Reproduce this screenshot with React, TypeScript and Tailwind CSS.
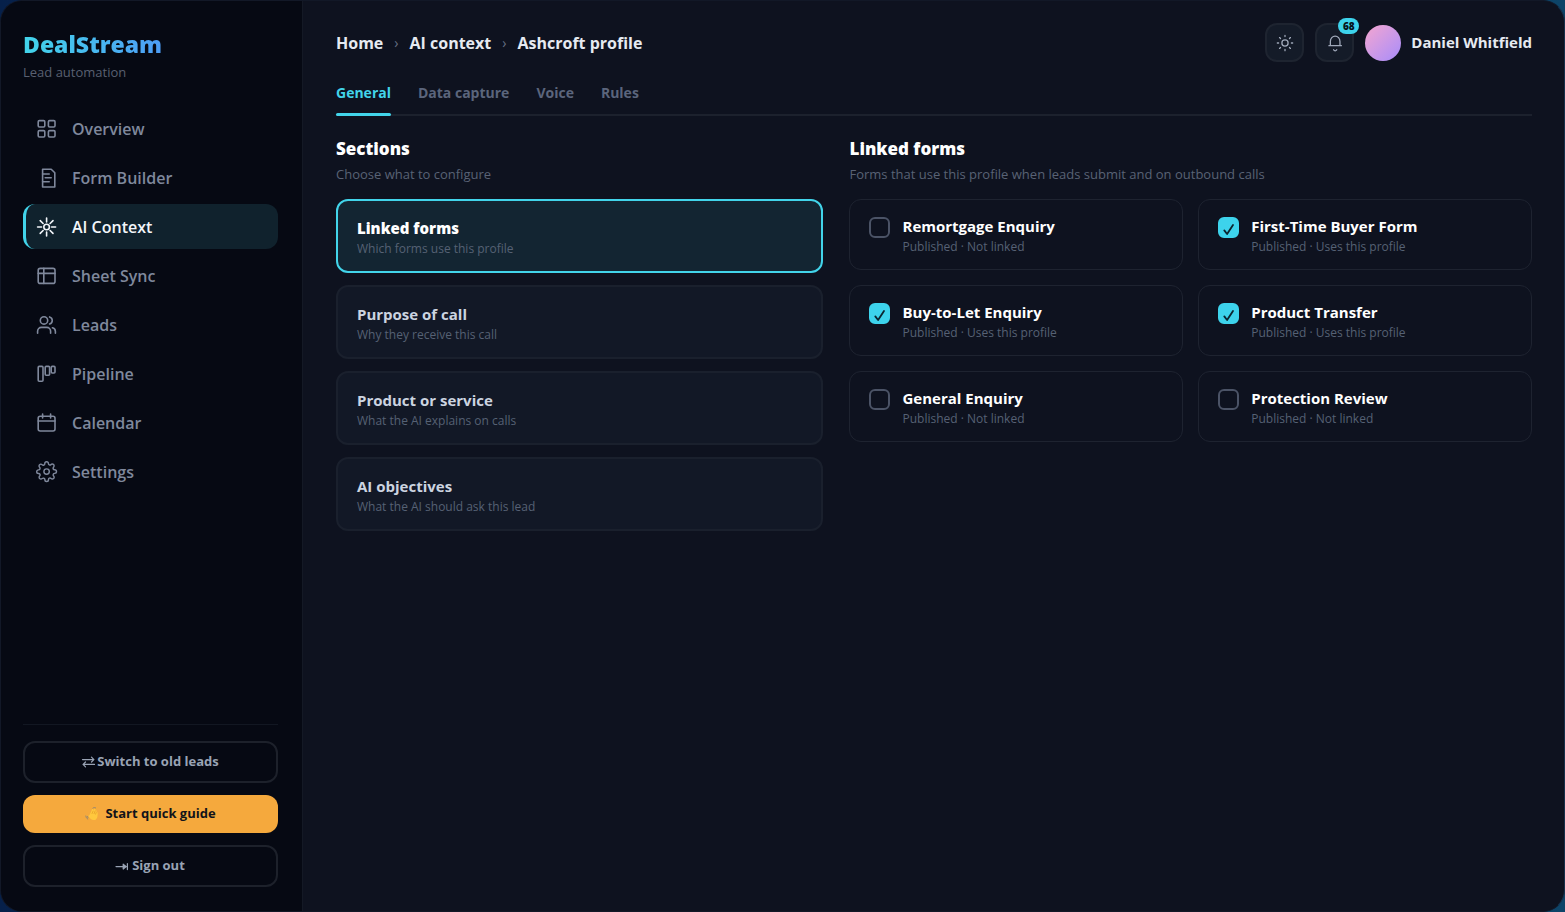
import { useState } from "react";
import type { ReactNode } from "react";

type IconProps = { children: ReactNode; className?: string; strokeWidth?: number };

function Icon({ children, className = "size-5", strokeWidth = 1.6 }: IconProps) {
  return (
    <svg
      viewBox="0 0 20 20"
      className={`${className} shrink-0 overflow-visible`}
      fill="none"
      stroke="currentColor"
      strokeWidth={strokeWidth}
      strokeLinecap="round"
      strokeLinejoin="round"
      aria-hidden="true"
    >
      {children}
    </svg>
  );
}

const navItems = [
  {
    label: "Overview",
    icon: (
      <>
        <rect x="1.2" y="1.6" width="6.6" height="6.4" rx="1.2" />
        <rect x="11.4" y="1.6" width="6.6" height="6.4" rx="1.2" />
        <rect x="1.2" y="11.6" width="6.6" height="6.4" rx="1.2" />
        <rect x="11.4" y="11.6" width="6.6" height="6.4" rx="1.2" />
      </>
    ),
  },
  {
    label: "Form Builder",
    icon: (
      <>
        <path d="M5.6 1.2h8.6l3.6 3.6V19H5.6z" />
        <path d="M5.6 6h6.6M8.2 9.8h6M5.6 13.8h6.6" />
      </>
    ),
  },
  {
    label: "AI Context",
    icon: (
      <>
        <circle cx="9.6" cy="10" r="2.8" />
        <path d="M9.6 1v4M9.6 15v4M.6 10h4M14.6 10h4M3.2 3.6l2.9 2.9M13.1 13.5l2.9 2.9M3.2 16.4l2.9-2.9M13.1 6.5l2.9-2.9" />
      </>
    ),
  },
  {
    label: "Sheet Sync",
    icon: (
      <>
        <rect x="1.2" y="2.4" width="16.8" height="15" rx="2" />
        <path d="M1.2 7.4h16.8M6.8 2.4v15" />
      </>
    ),
  },
  {
    label: "Leads",
    icon: (
      <>
        <circle cx="7" cy="5.4" r="3.7" />
        <path d="M.6 18.2v-2a3.8 3.8 0 0 1 3.8-3.8h5.4a3.8 3.8 0 0 1 3.8 3.8v2" />
        <path d="M12.6 1.9a3.7 3.7 0 0 1 0 7.1M15.4 12.7a3.8 3.8 0 0 1 3 3.7v1.8" />
      </>
    ),
  },
  {
    label: "Pipeline",
    icon: (
      <>
        <rect x="1.2" y="2.4" width="4.8" height="14.8" rx="1" />
        <rect x="8.2" y="2.4" width="4.4" height="8.8" rx="1" />
        <rect x="14.2" y="2.4" width="3.8" height="6.6" rx="1" />
      </>
    ),
  },
  {
    label: "Calendar",
    icon: (
      <>
        <rect x="1.2" y="3.2" width="16.8" height="14.8" rx="2" />
        <path d="M1.2 8h16.8M5.6 1v4M13.6 1v4" />
      </>
    ),
  },
  {
    label: "Settings",
    icon: (
      <g transform="translate(-1.2 -1.2) scale(.9)">
        <circle cx="12" cy="12" r="3" />
        <path d="M19.4 15a1.65 1.65 0 0 0 .33 1.82l.06.06a2 2 0 0 1 0 2.83 2 2 0 0 1-2.83 0l-.06-.06a1.65 1.65 0 0 0-1.82-.33 1.65 1.65 0 0 0-1 1.51V21a2 2 0 0 1-2 2 2 2 0 0 1-2-2v-.09A1.65 1.65 0 0 0 9 19.4a1.65 1.65 0 0 0-1.82.33l-.06.06a2 2 0 0 1-2.83 0 2 2 0 0 1 0-2.83l.06-.06a1.65 1.65 0 0 0 .33-1.82 1.65 1.65 0 0 0-1.51-1H3a2 2 0 0 1-2-2 2 2 0 0 1 2-2h.09A1.65 1.65 0 0 0 4.6 9a1.65 1.65 0 0 0-.33-1.82l-.06-.06a2 2 0 0 1 0-2.83 2 2 0 0 1 2.83 0l.06.06a1.65 1.65 0 0 0 1.82.33H9a1.65 1.65 0 0 0 1-1.51V3a2 2 0 0 1 2-2 2 2 0 0 1 2 2v.09a1.65 1.65 0 0 0 1 1.51 1.65 1.65 0 0 0 1.82-.33l.06-.06a2 2 0 0 1 2.83 0 2 2 0 0 1 0 2.83l-.06.06a1.65 1.65 0 0 0-.33 1.82V9a1.65 1.65 0 0 0 1.51 1H21a2 2 0 0 1 2 2 2 2 0 0 1-2 2h-.09a1.65 1.65 0 0 0-1.51 1z" />
      </g>
    ),
  },
];

const tabs = ["General", "Data capture", "Voice", "Rules"];

const sections = [
  { title: "Linked forms", hint: "Which forms use this profile" },
  { title: "Purpose of call", hint: "Why they receive this call" },
  { title: "Product or service", hint: "What the AI explains on calls" },
  { title: "AI objectives", hint: "What the AI should ask this lead" },
];

const initialForms = [
  { name: "Remortgage Enquiry", linked: false },
  { name: "First-Time Buyer Form", linked: true },
  { name: "Buy-to-Let Enquiry", linked: true },
  { name: "Product Transfer", linked: true },
  { name: "General Enquiry", linked: false },
  { name: "Protection Review", linked: false },
];

function Sidebar() {
  const [active, setActive] = useState("AI Context");

  return (
    <aside className="flex w-[302px] shrink-0 flex-col border-r border-[#141925] bg-[#060913] pt-[27px] pr-6 pb-6 pl-[22px]">
      <div>
        <span className="inline-block bg-linear-to-r from-[#42d4ea] to-[#4d9df5] bg-clip-text text-[23px] leading-8 font-extrabold text-transparent">
          DealStream
        </span>
        <p className="text-[13px] leading-6 text-[#596071]">Lead automation</p>
      </div>

      <nav className="mt-[22px] flex flex-col gap-1">
        {navItems.map((item) => (
          <a
            key={item.label}
            href="#"
            onClick={() => setActive(item.label)}
            className={`flex h-[45px] items-center gap-[15px] rounded-xl border-l-3 pl-[11px] text-base font-semibold ${
              active === item.label
                ? "border-[#42d4ea] bg-[#10222d] text-[#f3f6fa]"
                : "border-transparent text-[#7f889c]"
            }`}
          >
            <Icon>{item.icon}</Icon>
            {item.label}
          </a>
        ))}
      </nav>

      <div className="mt-auto flex flex-col gap-3 border-t border-[#121722] pt-4 text-[13px] font-bold">
        <button className="flex h-[42px] items-center justify-center gap-0.5 rounded-xl border-2 border-[#1d212b] text-[#99a3b4]">
          <Icon className="h-3 w-[13px]" strokeWidth={2}>
            <path d="M0 6h19M15 2l4 4-4 4M20 14H1M5 10l-4 4 4 4" />
          </Icon>
          Switch to old leads
        </button>
        <button className="flex h-[38px] items-center justify-center gap-1.5 rounded-xl bg-[#f5a93d] text-[#11131a]">
          <svg viewBox="0 0 14 14" className="size-3.5" aria-hidden="true">
            <path
              d="M4.4 8.2 7 2.6c.5-.9 1.5-.5 1.4.3l-.2 1 1-1.7c.5-.8 1.5-.3 1.3.5l-.2.9c.7-.6 1.4-.1 1.3.6l-.1.9c.7-.3 1.2.1 1.2.8 0 3-.3 7-3.8 7.2-2.2.1-3.9-1.5-5.2-3.6-.4-.8.3-1.6.7-1.3z"
              fill="#ffc83d"
            />
            <path d="m8.2 3.9-1.3 3M10.3 3.6 8.9 7M11.4 5.1l-1 2.4" stroke="#d98a1e" strokeWidth=".5" fill="none" />
            <path
              d="M7.6 1.4c1-1 2.4-1.1 3.4-.2M.8 8.6c.1 1.6.9 2.9 2.3 3.7M2.3 9.1c.1.9.5 1.5 1.2 2"
              stroke="#7c7f80"
              strokeWidth=".8"
              fill="none"
            />
          </svg>
          Start quick guide
        </button>
        <button className="flex h-[42px] items-center justify-center gap-1 rounded-xl border-2 border-[#1d212b] text-[#99a3b4]">
          <Icon className="size-3" strokeWidth={2}>
            <path d="M0 11h17" />
            <path d="m12 7 5 4-5 4zM19 6v10" fill="currentColor" />
          </Icon>
          Sign out
        </button>
      </div>
    </aside>
  );
}

function Header() {
  return (
    <header className="flex h-[39px] items-center justify-between">
      <nav aria-label="Breadcrumb" className="flex items-center gap-[11px] text-base font-bold text-[#e6eaf1]">
        <a href="#">Home</a>
        <span className="text-sm font-normal text-[#667085]">›</span>
        <a href="#">AI context</a>
        <span className="text-sm font-normal text-[#667085]">›</span>
        <span>Ashcroft profile</span>
      </nav>

      <div className="flex items-center gap-[11px]">
        <button
          aria-label="Toggle theme"
          className="flex size-[39px] items-center justify-center rounded-xl border-2 border-[#1e2430] bg-[#141b28] text-[#a0a9ba]"
        >
          <Icon className="size-4">
            <circle cx="10" cy="10" r="3.9" />
            <path d="M10 .4V2M10 18v1.600M.4 10H2M18 10h1.6M3.2 3.2l1.2 1.2M15.6 15.6l1.2 1.2M3.2 16.8l1.2-1.2M15.6 4.4l1.2-1.2" />
          </Icon>
        </button>
        <button
          aria-label="Notifications"
          className="relative flex size-[39px] items-center justify-center rounded-xl border-2 border-[#1e2430] bg-[#141b28] text-[#a0a9ba]"
        >
          <Icon className="size-4">
            <path d="M2.4 13.4h15.6M4.2 13.4V8a6 6.6 0 0 1 12 0v5.4M8.2 18.4c1 1.8 3 1.8 4 0" />
          </Icon>
          <span className="absolute -top-[7px] -right-[7px] flex h-4 w-[21px] items-center justify-center rounded-full bg-[#3dd3ec] text-[10px] font-extrabold text-[#07131c]">
            68
          </span>
        </button>
        <div className="flex items-center gap-2.5">
          <span className="size-9 rounded-full bg-linear-to-br from-[#f5a5cf] to-[#a78bfa]" />
          <span className="text-[15px] font-bold text-[#e6eaf1]">Daniel Whitfield</span>
        </div>
      </div>
    </header>
  );
}

function PanelTitle({ title, hint }: { title: string; hint: string }) {
  return (
    <div className="mb-[13px]">
      <h2 className="text-[17px] leading-[26px] font-extrabold text-white">{title}</h2>
      <p className="text-[13px] leading-6 text-[#596275]">{hint}</p>
    </div>
  );
}

export default function App() {
  const [tab, setTab] = useState("General");
  const [section, setSection] = useState("Linked forms");
  const [forms, setForms] = useState(initialForms);

  function toggleForm(name: string) {
    setForms(forms.map((f) => (f.name === name ? { ...f, linked: !f.linked } : f)));
  }

  return (
    <div className="flex min-h-screen bg-linear-to-r from-[#06204a] to-[#0d4468] font-['Open_Sans','Noto_Sans',sans-serif]">
      <div className="flex flex-1 overflow-hidden rounded-[22px] border border-[#121827] border-r-[#16304a] bg-[#0e121f]">
        <Sidebar />

        <main className="min-w-0 flex-1 pt-[22px] pr-8 pl-[33px]">
          <Header />

          <div role="tablist" className="mt-5 flex gap-[27px] border-b-2 border-[#1c212d]">
            {tabs.map((t) => (
              <button
                key={t}
                role="tab"
                aria-selected={tab === t}
                onClick={() => setTab(t)}
                className={`-mb-0.5 flex flex-col gap-[9px] text-sm leading-[22px] font-bold ${
                  tab === t ? "text-[#42d4ea]" : "text-[#5b657c]"
                }`}
              >
                {t}
                <span className={`h-[3px] w-full rounded-full ${tab === t ? "bg-[#42d4ea]" : ""}`} />
              </button>
            ))}
          </div>

          <div className="mt-5 grid grid-cols-[1fr_1.4fr] gap-[26px]">
            <section>
              <PanelTitle title="Sections" hint="Choose what to configure" />
              <div className="flex flex-col gap-3">
                {sections.map((s) => (
                  <button
                    key={s.title}
                    onClick={() => setSection(s.title)}
                    className={`rounded-xl border-2 px-[19px] pt-4 pb-3 text-left ${
                      section === s.title ? "border-[#42d4ea] bg-[#132532]" : "border-[#1a202d] bg-[#121826]"
                    }`}
                  >
                    <span
                      className={`block text-[15px] leading-[22px] ${
                        section === s.title ? "font-extrabold text-white" : "font-bold text-[#ccd4e0]"
                      }`}
                    >
                      {s.title}
                    </span>
                    <span className="block text-xs leading-5 text-[#566174]">{s.hint}</span>
                  </button>
                ))}
              </div>
            </section>

            <section>
              <PanelTitle title="Linked forms" hint="Forms that use this profile when leads submit and on outbound calls" />
              <div className="grid grid-cols-2 gap-[15px]">
                {forms.map((form) => (
                  <label
                    key={form.name}
                    className="flex gap-3 rounded-xl border border-[#1e2330] pt-[15px] pr-4 pb-3 pl-[19px]"
                  >
                    <span className="relative mt-0.5 size-[21px] shrink-0">
                      <input
                        type="checkbox"
                        checked={form.linked}
                        onChange={() => toggleForm(form.name)}
                        className="block size-[21px] appearance-none rounded-md border-2 border-[#4b5366] checked:border-[#3dd3ec] checked:bg-[#3dd3ec]"
                      />
                      {form.linked && (
                        <svg viewBox="0 0 21 21" className="pointer-events-none absolute inset-0" fill="none" aria-hidden="true">
                          <path
                            d="m6.3 13.4 2.8 3.6L15 8"
                            stroke="#0b2530"
                            strokeWidth="1.8"
                            strokeLinecap="round"
                            strokeLinejoin="round"
                          />
                        </svg>
                      )}
                    </span>
                    <span>
                      <span className="block text-[15px] leading-[22px] font-bold text-white">{form.name}</span>
                      <span className="block text-xs leading-5 text-[#566174]">
                        Published · {form.linked ? "Uses this profile" : "Not linked"}
                      </span>
                    </span>
                  </label>
                ))}
              </div>
            </section>
          </div>
        </main>
      </div>
    </div>
  );
}
